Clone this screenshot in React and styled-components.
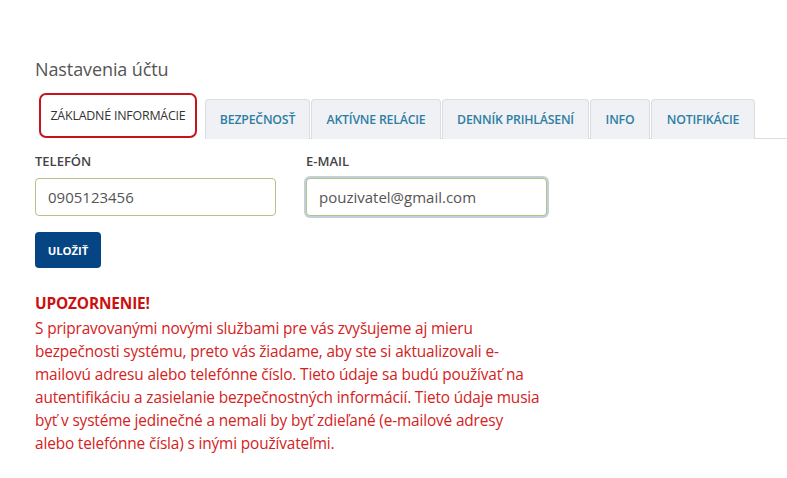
import React from "react";
import styled, { createGlobalStyle } from "styled-components";

const Global = createGlobalStyle`
  html, body { margin: 0; padding: 0; background: #fff; }
  body { font-family: "Open Sans", "Noto Sans", sans-serif; }
  * { box-sizing: border-box; }
`;

const Page = styled.div`
  padding: 56px 0 0 35px;
`;

const Title = styled.h1`
  margin: 0 0 12px 0;
  font-size: 18px;
  font-weight: 400;
  color: #555;
  line-height: 26px;
  letter-spacing: -0.1px;
`;

const TabBar = styled.div`
  display: flex;
  align-items: flex-end;
  border-bottom: 1px solid #dcdde0;
  height: 45px;
`;

const Tab = styled.div`
  height: 40px;
  display: flex;
  align-items: center;
  justify-content: center;
  width: ${(p) => p.$w}px;
  margin-right: 1px;
  margin-bottom: -1px;
  background: #f0f1f4;
  border: 1px solid #dcdde0;
  border-bottom: none;
  border-radius: 4px 4px 0 0;
  color: #2d7ea4;
  font-size: 12.3px;
  font-weight: 600;
  letter-spacing: -0.2px;
  white-space: nowrap;
`;

const ActiveWrap = styled.div`
  width: 170px;
  height: 46px;
  margin-bottom: -1px;
  display: flex;
  align-items: flex-start;
  justify-content: flex-start;
  padding-left: 4px;
  background: #fff;
`;

const ActiveTab = styled.div`
  width: 158px;
  height: 45px;
  border: 2px solid #c5141d;
  border-radius: 7px;
  display: flex;
  align-items: center;
  justify-content: center;
  color: #333;
  font-size: 12.4px;
  font-weight: 500;
  letter-spacing: -0.2px;
  white-space: nowrap;
  background: #fff;
`;

const Form = styled.div`
  display: grid;
  grid-template-columns: 241px 241px;
  column-gap: 30px;
  margin-top: 13px;
`;

const Field = styled.div`
  display: flex;
  flex-direction: column;
`;

const Label = styled.label`
  font-size: 13px;
  font-weight: 600;
  color: #444;
  line-height: 18px;
  margin-bottom: 8px;
`;

const Input = styled.div`
  height: 38px;
  border: 1px solid #b1c588;
  border-radius: 4px;
  padding: 0 12px;
  display: flex;
  align-items: center;
  font-size: 15px;
  color: #555;
  background: #fff;
  box-shadow: ${(p) => (p.$focus ? "0 0 0 2px #c3d0da" : "none")};
`;

const Button = styled.button`
  margin-top: 16px;
  width: 66px;
  height: 36px;
  border: none;
  border-radius: 4px;
  background: #064584;
  color: #fff;
  font-family: inherit;
  font-size: 11.3px;
  font-weight: 700;
  letter-spacing: 0px;
  padding: 0;
`;

const Warning = styled.div`
  margin-top: 24px;
  color: #d42222;
  font-size: 15.4px;
  line-height: 23px;
  letter-spacing: -0.15px;
`;

const WarnTitle = styled.div`
  font-weight: 700;
  color: #cc1010;
  margin-bottom: 2px;
`;

const Line = styled.div`
  white-space: nowrap;
`;

const tabs = [
  ["BEZPEČNOSŤ", 105],
  ["AKTÍVNE RELÁCIE", 130],
  ["DENNÍK PRIHLÁSENÍ", 147],
  ["INFO", 60],
  ["NOTIFIKÁCIE", 104],
];

const lines = [
  "S pripravovanými novými službami pre vás zvyšujeme aj mieru",
  "bezpečnosti systému, preto vás žiadame, aby ste si aktualizovali e-",
  "mailovú adresu alebo telefónne číslo. Tieto údaje sa budú používať na",
  "autentifikáciu a zasielanie bezpečnostných informácií. Tieto údaje musia",
  "byť v systéme jedinečné a nemali by byť zdieľané (e-mailové adresy",
  "alebo telefónne čísla) s inými používateľmi.",
];

export default function App() {
  return (
    <Page>
      <Global />
      <Title>Nastavenia účtu</Title>
      <TabBar>
        <ActiveWrap>
          <ActiveTab>ZÁKLADNÉ INFORMÁCIE</ActiveTab>
        </ActiveWrap>
        {tabs.map(([t, w]) => (
          <Tab key={t} $w={w}>{t}</Tab>
        ))}
      </TabBar>
      <Form>
        <Field>
          <Label>TELEFÓN</Label>
          <Input>0905123456</Input>
        </Field>
        <Field>
          <Label>E-MAIL</Label>
          <Input $focus>pouzivatel@gmail.com</Input>
        </Field>
      </Form>
      <Button>ULOŽIŤ</Button>
      <Warning>
        <WarnTitle>UPOZORNENIE!</WarnTitle>
        {lines.map((l) => (
          <Line key={l}>{l}</Line>
        ))}
      </Warning>
    </Page>
  );
}
